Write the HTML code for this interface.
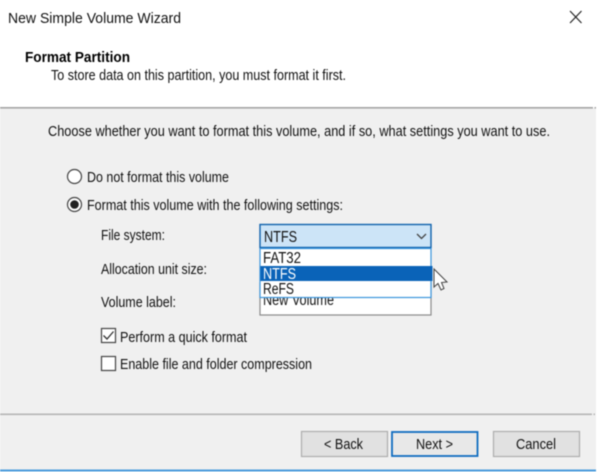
<!DOCTYPE html>
<html>
<head>
<meta charset="utf-8">
<style>
html,body{margin:0;padding:0;width:600px;height:472px;overflow:hidden;background:#fff}
svg{display:block;filter:blur(0.45px)}
text{font-family:"Liberation Sans",sans-serif;fill:#111;font-size:14.5px}
.c{font-size:15.5px}
</style>
</head>
<body>
<svg width="600" height="472" viewBox="0 0 600 472" xmlns="http://www.w3.org/2000/svg">
<rect width="600" height="472" fill="#fff"/>
<rect x="0" y="108" width="596" height="362" fill="#f0f0f0"/>
<rect x="0" y="107" width="593" height="1.6" fill="#a5a5a5"/>
<rect x="594.500" y="107" width="1.500" height="1.6" fill="#a5a5a5"/>
<rect x="0" y="413.500" width="592" height="1.6" fill="#b5b5b5"/>
<rect x="593.500" y="413.500" width="1.500" height="1.6" fill="#b5b5b5"/>
<rect x="0" y="469.5" width="596" height="2" fill="#4a9bdc"/>
<path d="M570 11L581.500 23M581.500 11L570 23" stroke="#222" stroke-width="1.2" fill="none"/>

<text x="8" y="23" textLength="173" lengthAdjust="spacingAndGlyphs">New Simple Volume Wizard</text>
<text x="25" y="62" textLength="105" lengthAdjust="spacingAndGlyphs" style="font-weight:bold;fill:#000">Format Partition</text>
<text x="51" y="80" textLength="295" lengthAdjust="spacingAndGlyphs">To store data on this partition, you must format it first.</text>
<text x="48" y="136" textLength="502" lengthAdjust="spacingAndGlyphs">Choose whether you want to format this volume, and if so, what settings you want to use.</text>

<circle cx="74.500" cy="176.500" r="7" fill="#fff" stroke="#444" stroke-width="1.2"/>
<text x="87" y="182" textLength="142" lengthAdjust="spacingAndGlyphs">Do not format this volume</text>
<circle cx="74.500" cy="204.500" r="7" fill="#fff" stroke="#444" stroke-width="1.2"/>
<circle cx="74.500" cy="204.500" r="4.300" fill="#222"/>
<text x="87" y="210" textLength="256" lengthAdjust="spacingAndGlyphs">Format this volume with the following settings:</text>

<text x="101" y="240" textLength="64" lengthAdjust="spacingAndGlyphs">File system:</text>
<text x="101" y="274" textLength="106" lengthAdjust="spacingAndGlyphs">Allocation unit size:</text>
<text x="101" y="307" textLength="75" lengthAdjust="spacingAndGlyphs">Volume label:</text>

<rect x="260" y="283" width="171" height="32" fill="#fff" stroke="#8a8a8a" stroke-width="1.2"/>
<text class="c" x="263" y="305" textLength="71" lengthAdjust="spacingAndGlyphs">New Volume</text>

<rect x="260" y="224.500" width="171" height="23" fill="#cce4f7" stroke="#0f62ad" stroke-width="1.4"/>
<text class="c" x="264" y="242" textLength="33" lengthAdjust="spacingAndGlyphs">NTFS</text>
<path d="M417 234L421.500 238.500L426 234" stroke="#444" stroke-width="1.300" fill="none"/>

<rect x="260" y="248.500" width="171" height="49" fill="#fff" stroke="#3b95dc" stroke-width="1.2"/>
<rect x="260.500" y="266" width="172" height="15" fill="#0a63b8"/>
<text class="c" x="263" y="263" textLength="38" lengthAdjust="spacingAndGlyphs">FAT32</text>
<text class="c" x="263" y="279" textLength="33" lengthAdjust="spacingAndGlyphs" style="fill:#fff">NTFS</text>
<text class="c" x="263" y="294" textLength="31" lengthAdjust="spacingAndGlyphs">ReFS</text>

<path d="M434 269L434 287L438 283.500L441 290L444 288.500L441.500 282.500L447 282Z" fill="#fff" stroke="#444" stroke-width="1"/>

<rect x="101.500" y="328.500" width="14" height="14" fill="#fff" stroke="#444" stroke-width="1.2"/>
<path d="M103.500 335.500L107 339L113.500 331.500" stroke="#333" stroke-width="1.300" fill="none"/>
<text x="120" y="342" textLength="127" lengthAdjust="spacingAndGlyphs">Perform a quick format</text>
<rect x="101.500" y="356.500" width="14" height="14" fill="#fff" stroke="#444" stroke-width="1.2"/>
<text x="120" y="369" textLength="192" lengthAdjust="spacingAndGlyphs">Enable file and folder compression</text>

<rect x="301.500" y="431.500" width="86" height="25" fill="#e1e1e1" stroke="#adadad" stroke-width="1.2"/>
<text x="324" y="449" textLength="39" lengthAdjust="spacingAndGlyphs">&lt; Back</text>
<rect x="392" y="432" width="85.500" height="24" fill="#e8e8e8" stroke="#0f6cc0" stroke-width="1.800"/>
<text x="416" y="449" textLength="37" lengthAdjust="spacingAndGlyphs">Next &gt;</text>
<rect x="493.500" y="431.500" width="86" height="25" fill="#e1e1e1" stroke="#adadad" stroke-width="1.2"/>
<text x="516" y="449" textLength="40" lengthAdjust="spacingAndGlyphs">Cancel</text>
</svg>
</body>
</html>
